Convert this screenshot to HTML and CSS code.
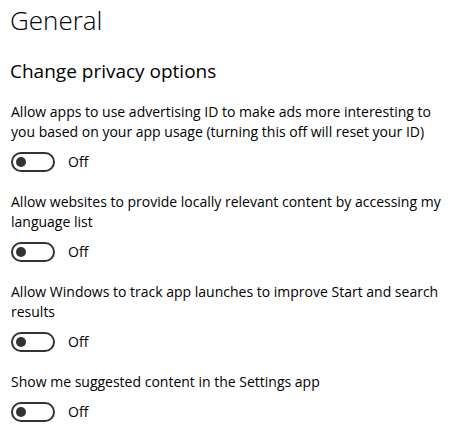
FILE: index.html
```html
<!DOCTYPE html>
<html lang="en">
<head>
    <meta charset="UTF-8">
    <meta name="viewport" content="width=device-width, initial-scale=1.0">
    <title>General</title>
    <link rel="stylesheet" href="styles.css">
</head>
<body>
    <h1>General</h1>
    <h2>Change privacy options</h2>

    <div class="setting">
        <p class="label">Allow apps to use advertising ID to make ads more interesting to you based on your app usage (turning this off will reset your ID)</p>
        <div class="toggle-row">
            <span class="toggle"><span class="knob"></span></span>
            <span class="state">Off</span>
        </div>
    </div>

    <div class="setting">
        <p class="label">Allow websites to provide locally relevant content by accessing my language list</p>
        <div class="toggle-row">
            <span class="toggle"><span class="knob"></span></span>
            <span class="state">Off</span>
        </div>
    </div>

    <div class="setting">
        <p class="label">Allow Windows to track app launches to improve Start and search results</p>
        <div class="toggle-row">
            <span class="toggle"><span class="knob"></span></span>
            <span class="state">Off</span>
        </div>
    </div>

    <div class="setting">
        <p class="label">Show me suggested content in the Settings app</p>
        <div class="toggle-row">
            <span class="toggle"><span class="knob"></span></span>
            <span class="state">Off</span>
        </div>
    </div>
</body>
</html>
```
FILE: styles.css
```css
body {
    font-family: "Open Sans", "Noto Sans", sans-serif;
    margin: 0;
    padding: 0 10px 0 11px;
    background-color: #ffffff;
    color: #000000;
}
h1 {
    font-size: 26px;
    font-weight: 300;
    line-height: 36px;
    margin: 2px 0 0 -1px;
}
h2 {
    font-size: 19px;
    font-weight: 400;
    line-height: 26px;
    margin: 20px 0 18px -1px;
}
.setting {
    margin-bottom: 20px;
}
.label {
    font-size: 14px;
    line-height: 20px;
    margin: 0 0 10px 0;
}
.toggle-row {
    display: flex;
    align-items: center;
    gap: 13px;
}
.toggle {
    box-sizing: border-box;
    width: 44px;
    height: 20px;
    border: 2px solid #333333;
    border-radius: 10px;
    display: flex;
    align-items: center;
    padding-left: 3px;
}
.knob {
    width: 10px;
    height: 10px;
    border-radius: 50%;
    background-color: #333333;
}
.state {
    font-size: 14px;
    line-height: 20px;
}
```
